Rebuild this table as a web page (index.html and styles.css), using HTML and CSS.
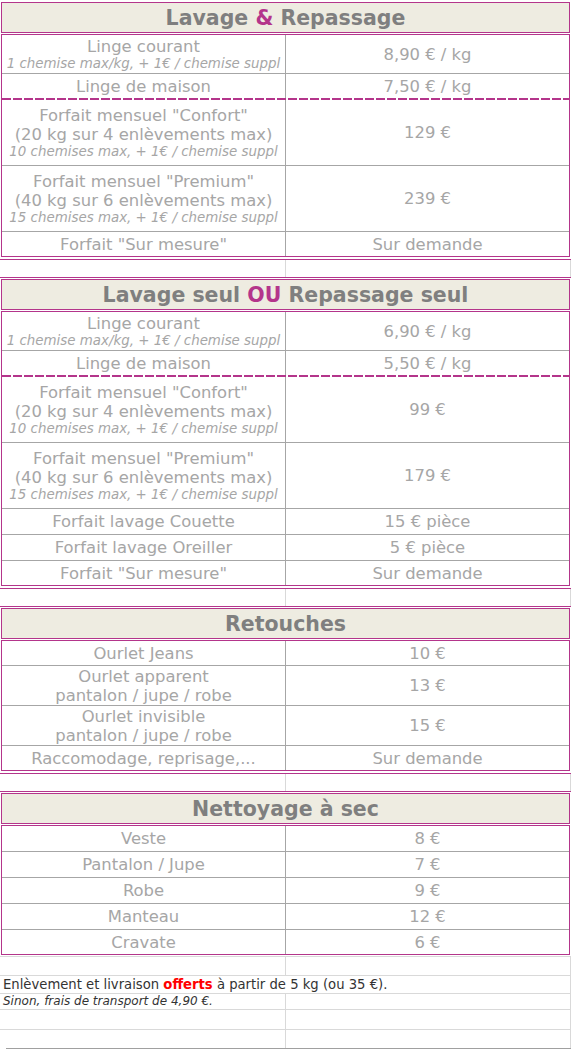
FILE: index.html
```html
<!DOCTYPE html>
<html lang="fr">
<head>
<meta charset="utf-8">
<title>Tarifs</title>
<link rel="stylesheet" href="styles.css">
</head>
<body>
<div class="sheet">

  <h2 class="title"><span>Lavage <span class="accent">&amp;</span> Repassage</span></h2>
  <div class="table">
    <div class="row two">
      <div class="cell"><span>Linge courant</span><span class="note">1 chemise max/kg, + 1€ / chemise suppl</span></div>
      <div class="cell">8,90 € / kg</div>
    </div>
    <div class="row nb">
      <div class="cell">Linge de maison</div>
      <div class="cell">7,50 € / kg</div>
    </div>
    <div class="dash"></div>
    <div class="row three">
      <div class="cell"><span>Forfait mensuel "Confort"</span><span>(20 kg sur 4 enlèvements max)</span><span class="note">10 chemises max, + 1€ / chemise suppl</span></div>
      <div class="cell">129 €</div>
    </div>
    <div class="row three">
      <div class="cell"><span>Forfait mensuel "Premium"</span><span>(40 kg sur 6 enlèvements max)</span><span class="note">15 chemises max, + 1€ / chemise suppl</span></div>
      <div class="cell">239 €</div>
    </div>
    <div class="row">
      <div class="cell">Forfait "Sur mesure"</div>
      <div class="cell">Sur demande</div>
    </div>
  </div>
  <div class="gap"><div></div><div></div><div></div></div>

  <h2 class="title"><span>Lavage seul <span class="accent">OU</span> Repassage seul</span></h2>
  <div class="table">
    <div class="row two">
      <div class="cell"><span>Linge courant</span><span class="note">1 chemise max/kg, + 1€ / chemise suppl</span></div>
      <div class="cell">6,90 € / kg</div>
    </div>
    <div class="row nb">
      <div class="cell">Linge de maison</div>
      <div class="cell">5,50 € / kg</div>
    </div>
    <div class="dash"></div>
    <div class="row three">
      <div class="cell"><span>Forfait mensuel "Confort"</span><span>(20 kg sur 4 enlèvements max)</span><span class="note">10 chemises max, + 1€ / chemise suppl</span></div>
      <div class="cell">99 €</div>
    </div>
    <div class="row three">
      <div class="cell"><span>Forfait mensuel "Premium"</span><span>(40 kg sur 6 enlèvements max)</span><span class="note">15 chemises max, + 1€ / chemise suppl</span></div>
      <div class="cell">179 €</div>
    </div>
    <div class="row">
      <div class="cell">Forfait lavage Couette</div>
      <div class="cell">15 € pièce</div>
    </div>
    <div class="row">
      <div class="cell">Forfait lavage Oreiller</div>
      <div class="cell">5 € pièce</div>
    </div>
    <div class="row">
      <div class="cell">Forfait "Sur mesure"</div>
      <div class="cell">Sur demande</div>
    </div>
  </div>
  <div class="gap"><div></div><div></div><div></div></div>

  <h2 class="title"><span>Retouches</span></h2>
  <div class="table">
    <div class="row short">
      <div class="cell">Ourlet Jeans</div>
      <div class="cell">10 €</div>
    </div>
    <div class="row pair">
      <div class="cell"><span>Ourlet apparent</span><span>pantalon / jupe / robe</span></div>
      <div class="cell">13 €</div>
    </div>
    <div class="row pair">
      <div class="cell"><span>Ourlet invisible</span><span>pantalon / jupe / robe</span></div>
      <div class="cell">15 €</div>
    </div>
    <div class="row">
      <div class="cell">Raccomodage, reprisage,...</div>
      <div class="cell">Sur demande</div>
    </div>
  </div>
  <div class="gap"><div></div><div></div><div></div></div>

  <h2 class="title"><span>Nettoyage à sec</span></h2>
  <div class="table">
    <div class="row">
      <div class="cell">Veste</div>
      <div class="cell">8 €</div>
    </div>
    <div class="row">
      <div class="cell">Pantalon / Jupe</div>
      <div class="cell">7 €</div>
    </div>
    <div class="row">
      <div class="cell">Robe</div>
      <div class="cell">9 €</div>
    </div>
    <div class="row">
      <div class="cell">Manteau</div>
      <div class="cell">12 €</div>
    </div>
    <div class="row">
      <div class="cell">Cravate</div>
      <div class="cell">6 €</div>
    </div>
  </div>

  <div class="foot">
    <div class="frow f19"><div></div><div></div><div></div></div>
    <div class="frow f18"><div class="wide">Enlèvement et livraison <strong class="red">offerts</strong> à partir de 5 kg (ou 35 €).</div><div></div></div>
    <div class="frow f16"><div class="txt"><em>Sinon, frais de transport de 4,90 €.</em></div><div></div><div></div></div>
    <div class="frow f20"><div></div><div></div><div></div></div>
    <div class="frow f19"><div></div><div></div><div></div></div>
    <div class="floor"></div>
  </div>

</div>
</body>
</html>
```

FILE: styles.css
```css
* { box-sizing: border-box; }

html, body {
  margin: 0;
  padding: 0;
  background: #ffffff;
}

body {
  font-family: "DejaVu Sans", Verdana, sans-serif;
  color: #a6a6a6;
}

.sheet {
  width: 571px;
  padding-top: 2px;
}

.title {
  margin: 0 0 0 1px;
  width: 569px;
  height: 31px;
  padding-top: 2px;
  border: 1px solid #b4358b;
  background: #eeece1;
  color: #7f7f7f;
  font-size: 20.5px;
  font-weight: bold;
  line-height: 1;
  display: flex;
  align-items: center;
  justify-content: center;
  white-space: nowrap;
}

.accent {
  color: #b4358b;
}

.table {
  margin: 1px 0 0 1px;
  width: 569px;
  border: 1px solid #b4358b;
}

.row {
  display: grid;
  grid-template-columns: 284px 283px;
  height: 26px;
  border-bottom: 1px solid #a6a6a6;
}

.row:last-child {
  height: 24px;
  border-bottom: 0;
}

.row.nb {
  height: 24px;
  border-bottom: 0;
}

.row.short { height: 25px; }
.row.two { height: 39px; }
.row.three { height: 66px; }
.row.pair { height: 40px; }

.cell {
  display: flex;
  flex-direction: column;
  align-items: center;
  justify-content: center;
  text-align: center;
  font-size: 16.4px;
  line-height: 19px;
  white-space: nowrap;
  overflow: hidden;
}

.cell:first-child {
  border-right: 1px solid #a6a6a6;
}

.note {
  font-style: italic;
  font-size: 13.4px;
  line-height: 15px;
}

.dash {
  height: 2px;
  background: repeating-linear-gradient(90deg, #b4358b 0 9px, #ffffff 9px 11px);
}

.gap {
  display: grid;
  grid-template-columns: 286px 285px 1fr;
  height: 19px;
  margin: 2px 0 1px;
  border-top: 1px solid #b4358b;
  border-bottom: 1px solid #b4358b;
}

.gap > div:nth-child(-n+2) {
  border-right: 1px solid #d9d9d9;
}

.foot {
  margin-top: 1px;
}

.frow {
  display: grid;
  grid-template-columns: 286px 285px 1fr;
  border-top: 1px solid #d9d9d9;
  color: #333333;
}

.frow > div:nth-child(-n+2) {
  border-right: 1px solid #d9d9d9;
}

.frow > .wide {
  grid-column: 1 / 3;
}

.f19 { height: 19px; }
.f18 { height: 18px; }
.f16 { height: 16px; }
.f20 { height: 20px; }

.wide {
  padding-left: 3px;
  font-size: 13.2px;
  line-height: 17px;
  white-space: nowrap;
}

.txt {
  padding-left: 3px;
  font-size: 12px;
  line-height: 15px;
  white-space: nowrap;
}

.red {
  color: #ff0000;
}

.floor {
  margin-left: 6px;
  height: 1px;
  background: #a0a0a0;
}
```
